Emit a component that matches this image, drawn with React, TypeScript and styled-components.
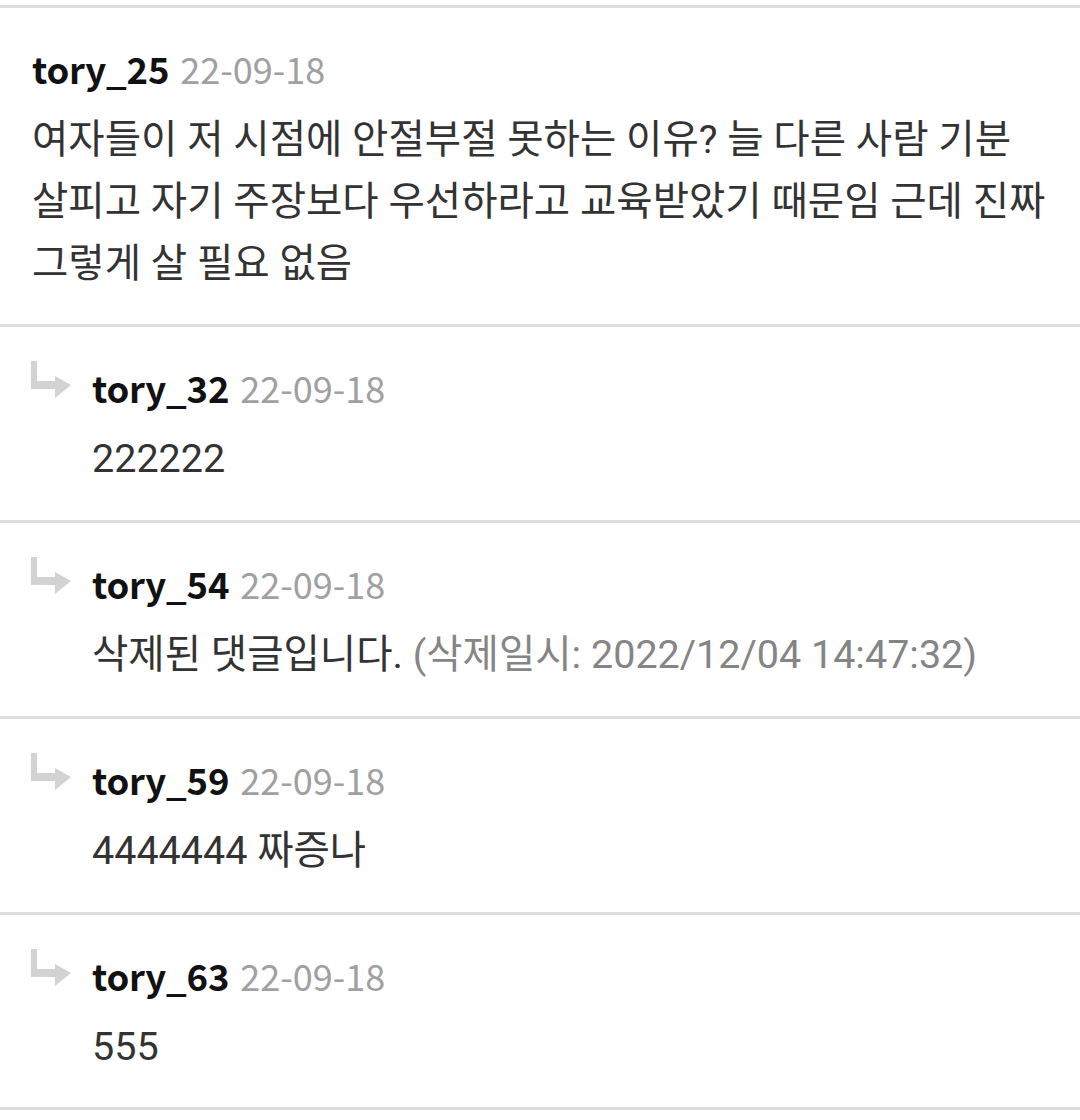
import React from 'react';
import styled, { createGlobalStyle } from 'styled-components';

const Global = createGlobalStyle`
  html, body { margin: 0; padding: 0; background: #ffffff; }
  body { font-family: Roboto, "Noto Sans CJK KR", sans-serif; }
`;

const List = styled.div`
  padding-top: 5px;
  display: flex;
  flex-direction: column;
`;

const Item = styled.div<{ $reply?: boolean }>`
  border-top: 3px solid #dddddd;
  display: flex;
  align-items: flex-start;
  gap: 20px;
  padding: 0 20px 0 ${(p) => (p.$reply ? 31 : 32)}px;
  height: ${(p) => (p.$reply ? 196 : 319)}px;
  box-sizing: border-box;
  &:last-child { border-bottom: 3px solid #dddddd; height: 198px; }
`;

const ArrowIcon = styled.svg`
  flex: none;
  width: 41px;
  height: 38px;
  margin-top: 34px;
`;

const Body = styled.div`
  flex: 1;
  min-width: 0;
  padding-top: 35px;
`;

const Header = styled.div`
  font-family: "Noto Sans CJK KR", sans-serif;
  line-height: 50px;
  height: 50px;
  white-space: nowrap;
`;

const Name = styled.span`
  font-size: 36.5px;
  font-weight: 700;
  color: #111111;
  letter-spacing: -0.2px;
`;

const DateText = styled.span`
  font-size: 36px;
  font-weight: 400;
  color: #a0a0a0;
  margin-left: 11px;
`;

const Text = styled.div`
  margin-top: 16px;
  font-size: 39.5px;
  line-height: 62px;
  color: #333333;
  word-break: keep-all;
`;

const Muted = styled.span`
  color: #858585;
`;

const Arrow = () => (
  <ArrowIcon viewBox="0 0 41 38">
    <path d="M0 0 H6 V20 H24 V15 L40 24 L24 37 V28 H0 Z" fill="#d2d2d2" />
  </ArrowIcon>
);

type C = { name: string; text: React.ReactNode; reply?: boolean };

const comments: C[] = [
  {
    name: 'tory_25',
    text: '여자들이 저 시점에 안절부절 못하는 이유? 늘 다른 사람 기분 살피고 자기 주장보다 우선하라고 교육받았기 때문임 근데 진짜 그렇게 살 필요 없음',
  },
  { name: 'tory_32', text: '222222', reply: true },
  {
    name: 'tory_54',
    text: (
      <>
        삭제된 댓글입니다. <Muted>(삭제일시: 2022/12/04 14:47:32)</Muted>
      </>
    ),
    reply: true,
  },
  { name: 'tory_59', text: '4444444 짜증나', reply: true },
  { name: 'tory_63', text: '555', reply: true },
];

export default function App() {
  return (
    <>
      <Global />
      <List>
        {comments.map((c) => (
          <Item key={c.name} $reply={c.reply}>
            {c.reply && <Arrow />}
            <Body>
              <Header>
                <Name>{c.name}</Name>
                <DateText>22-09-18</DateText>
              </Header>
              <Text>{c.text}</Text>
            </Body>
          </Item>
        ))}
      </List>
    </>
  );
}
